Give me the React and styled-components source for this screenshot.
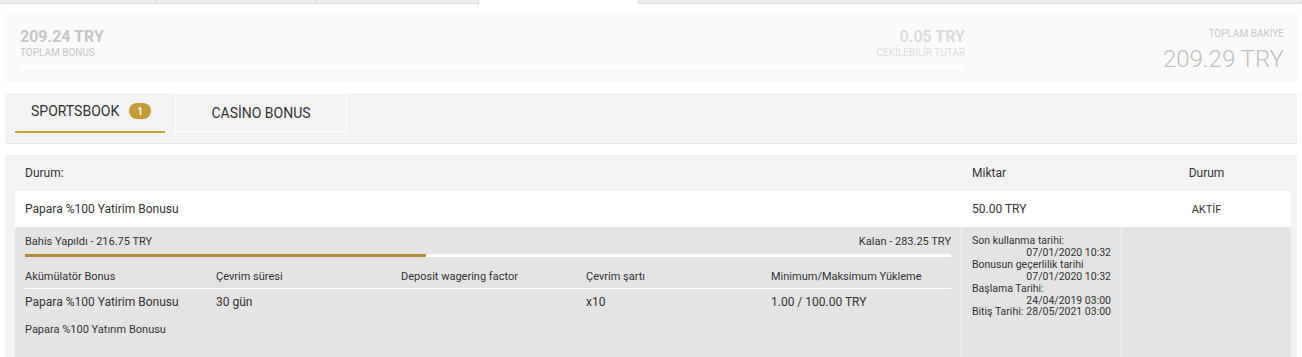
import React from "react";
import styled, { createGlobalStyle } from "styled-components";

const Global = createGlobalStyle`
  html, body { margin: 0; padding: 0; background: #fff; }
  body { font-family: Roboto, "Liberation Sans", Arial, sans-serif; color: #333; }
  * { box-sizing: border-box; }
`;

const Page = styled.div`
  width: 1302px;
  padding: 0 5px;
`;

const TopTabs = styled.div`
  display: flex;
  height: 4px;
  margin: 0 -5px;
`;

const TopTab = styled.div`
  width: ${(p) => p.$w}px;
  flex: ${(p) => (p.$grow ? 1 : "none")};
  background: ${(p) => (p.$active ? "#fff" : "#eeeeee")};
  border-bottom: 1px solid ${(p) => (p.$active ? "#fff" : "#dcdcdc")};
  border-right: 1px solid ${(p) => (p.$active ? "#fff" : "#dcdcdc")};
  border-left: ${(p) => (p.$leftBorder ? "1px solid #dcdcdc" : "none")};
`;

const Summary = styled.div`
  margin-top: 9px;
  background: #fafafa;
  height: 69px;
  display: flex;
  padding: 14px 13px 0 15px;
`;

const SummaryLeft = styled.div`
  width: 945px;
  display: flex;
  flex-direction: column;
`;

const SummaryRow = styled.div`
  display: flex;
  justify-content: space-between;
`;

const Stat = styled.div`
  display: flex;
  flex-direction: column;
  align-items: ${(p) => (p.$right ? "flex-end" : "flex-start")};
  color: ${(p) => p.$color};
`;

const StatValue = styled.div`
  font-size: 16px;
  font-weight: 700;
  line-height: 19px;
`;

const StatLabel = styled.div`
  font-size: 10px;
  line-height: 12px;
  text-transform: uppercase;
  margin-top: 1px;
`;

const WhiteTrack = styled.div`
  height: 4px;
  background: #fff;
  margin-top: 6px;
`;

const SummaryRight = styled.div`
  flex: 1;
  display: flex;
  flex-direction: column;
  align-items: flex-end;
  color: #c6c6c6;
  padding-top: 1px;
`;

const BigLabel = styled.div`
  font-size: 10px;
  line-height: 12px;
  color: #c8c8c8;
`;

const BigValue = styled.div`
  font-size: 24px;
  font-weight: 300;
  line-height: 28px;
  margin-top: 5px;
  color: #c0c0c0;
`;

const TabBar = styled.div`
  margin-top: 11px;
  height: 51px;
  background: #f3f3f3;
  border-bottom: 1px solid #e6e6e6;
  display: flex;
  gap: 10px;
  padding-left: 10px;
`;

const Tab = styled.div`
  width: ${(p) => p.$w}px;
  height: ${(p) => (p.$active ? 40 : 39)}px;
  display: flex;
  align-items: center;
  justify-content: ${(p) => (p.$active ? "flex-start" : "center")};
  padding-left: ${(p) => (p.$active ? 16 : 0)}px;
  padding-bottom: ${(p) => (p.$active ? 2 : 0)}px;
  font-size: 14px;
  color: #333;
  text-transform: uppercase;
  border: ${(p) => (p.$active ? "none" : "1px solid #fff")};
  border-bottom: ${(p) => (p.$active ? "2px solid #c9a13d" : "1px solid #fff")};
`;

const Badge = styled.span`
  display: inline-flex;
  align-items: center;
  justify-content: center;
  width: 22px;
  height: 16px;
  border-radius: 8px;
  background: #c49b35;
  color: #fff;
  font-size: 10px;
  font-weight: 700;
  margin-left: 10px;
`;

const TablePanel = styled.div`
  margin-top: 11px;
  background: #f3f3f3;
  padding: 0 6px 0 10px;
  height: 202px;
`;

const Row = styled.div`
  display: grid;
  grid-template-columns: 946px 160px 1fr;
  background: ${(p) => p.$bg};
  min-height: ${(p) => p.$h}px;
  align-items: ${(p) => (p.$top ? "stretch" : "center")};
`;

const Cell = styled.div`
  padding: 0 10px 0 ${(p) => (p.$first ? 10 : 11)}px;
  font-size: ${(p) => p.$size || 12}px;
  text-align: ${(p) => (p.$center ? "center" : "left")};
  color: #333;
`;

const DetailCell = styled.div`
  padding: ${(p) => (p.$pad ? "8px 10px 0" : "0")};
  border-left: ${(p) => (p.$divider ? "1px solid #f1f1f1" : "none")};
  min-height: 130px;
`;

const ProgressHead = styled.div`
  display: flex;
  justify-content: space-between;
  font-size: 11px;
  line-height: 13px;
  color: #333;
`;

const Track = styled.div`
  height: 3px;
  background: #fff;
  margin-top: 6px;
  display: flex;
`;

const Fill = styled.div`
  height: 100%;
  background: #b58a36;
`;

const SubGrid = styled.div`
  display: grid;
  grid-template-columns: 191px 185px 185px 185px 1fr;
  margin-top: 13px;
`;

const SubHead = styled.div`
  font-size: 11px;
  line-height: 13px;
  padding-bottom: 5px;
  border-bottom: 1px solid #fff;
  color: #333;
`;

const SubData = styled.div`
  font-size: 12px;
  line-height: 14px;
  padding-top: 6px;
  color: #333;
`;

const Note = styled.div`
  font-size: 11px;
  line-height: 13px;
  margin-top: 14px;
  color: #333;
`;

const DateItem = styled.div`
  display: flex;
  flex-wrap: wrap;
  font-size: 10.5px;
  line-height: 11.9px;
  color: #333;
`;

const DateValue = styled.span`
  margin-left: auto;
`;

const dates = [
  ["Son kullanma tarihi:", "07/01/2020 10:32"],
  ["Bonusun geçerlilik tarihi", "07/01/2020 10:32"],
  ["Başlama Tarihi:", "24/04/2019 03:00"],
  ["Bitiş Tarihi:", "28/05/2021 03:00"],
];

const subCols = [
  ["Akümülatör Bonus", "Papara %100 Yatirim Bonusu"],
  ["Çevrim süresi", "30 gün"],
  ["Deposit wagering factor", ""],
  ["Çevrim şartı", "x10"],
  ["Minimum/Maksimum Yükleme", "1.00 / 100.00 TRY"],
];

export default function App() {
  return (
    <>
      <Global />
      <Page>
        <TopTabs>
          <TopTab $w={156} />
          <TopTab $w={161} />
          <TopTab $w={162} />
          <TopTab $w={159} $active />
          <TopTab $grow $leftBorder />
        </TopTabs>

        <Summary>
          <SummaryLeft>
            <SummaryRow>
              <Stat $color="#c6c6c6">
                <StatValue>209.24 TRY</StatValue>
                <StatLabel>Toplam Bonus</StatLabel>
              </Stat>
              <Stat $right $color="#dcdcdc">
                <StatValue>0.05 TRY</StatValue>
                <StatLabel>ÇEKİLEBİLİR TUTAR</StatLabel>
              </Stat>
            </SummaryRow>
            <WhiteTrack />
          </SummaryLeft>
          <SummaryRight>
            <BigLabel>TOPLAM BAKİYE</BigLabel>
            <BigValue>209.29 TRY</BigValue>
          </SummaryRight>
        </Summary>

        <TabBar>
          <Tab $w={150} $active>
            Sportsbook<Badge>1</Badge>
          </Tab>
          <Tab $w={172}>CASİNO BONUS</Tab>
        </TabBar>

        <TablePanel>
          <Row $bg="#f3f3f3" $h={36}>
            <Cell $first>Durum:</Cell>
            <Cell>Miktar</Cell>
            <Cell $center>Durum</Cell>
          </Row>
          <Row $bg="#fff" $h={36}>
            <Cell $first>Papara %100 Yatirim Bonusu</Cell>
            <Cell>50.00 TRY</Cell>
            <Cell $center $size={11}>AKTİF</Cell>
          </Row>
          <Row $bg="#e4e4e4" $h={130} $top>
            <DetailCell $pad>
              <ProgressHead>
                <span>Bahis Yapıldı - 216.75 TRY</span>
                <span>Kalan - 283.25 TRY</span>
              </ProgressHead>
              <Track>
                <Fill style={{ width: `${(216.75 / 500) * 100}%` }} />
              </Track>
              <SubGrid>
                {subCols.map(([h]) => (
                  <SubHead key={h}>{h}</SubHead>
                ))}
                {subCols.map(([h, v]) => (
                  <SubData key={h + "v"}>{v}</SubData>
                ))}
              </SubGrid>
              <Note>Papara %100 Yatırım Bonusu</Note>
            </DetailCell>
            <DetailCell $pad $divider>
              {dates.map(([l, v]) => (
                <DateItem key={l}>
                  <span>{l}</span>
                  <DateValue>{v}</DateValue>
                </DateItem>
              ))}
            </DetailCell>
            <DetailCell $divider />
          </Row>
        </TablePanel>
      </Page>
    </>
  );
}
